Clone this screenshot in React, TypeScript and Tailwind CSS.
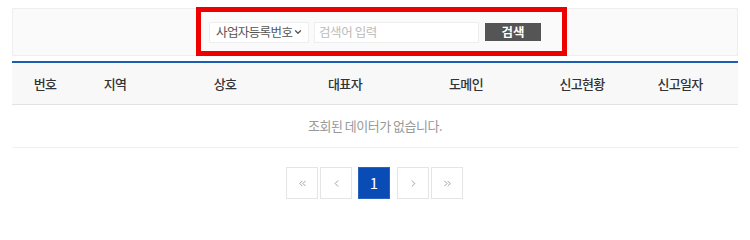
import { ChevronDown, ChevronLeft, ChevronRight, ChevronsLeft, ChevronsRight } from "lucide-react"

const columns = [
  { label: "번호", width: "w-[66px]" },
  { label: "지역", width: "w-[74px]" },
  { label: "상호", width: "w-[146px]" },
  { label: "대표자", width: "w-[94px]" },
  { label: "도메인", width: "w-[148px]" },
  { label: "신고현황", width: "w-[84px]" },
  { label: "신고일자", width: "w-[112px]" },
]

export default function App() {
  return (
    <div className="w-[750px] h-[222px] bg-white font-['Noto_Sans_CJK_KR',sans-serif] text-[#333]">
      <div className="px-3 pt-2">
        {/* search box */}
        <div className="relative h-[48px] border border-[#eeeeee] bg-[#fafafa] flex items-center justify-center">
          <div className="flex items-center">
            <div className="w-[100px] h-[21px] bg-white border border-[#eeeeee] flex items-center pl-[6px] text-[12.5px] tracking-[-0.6px] text-[#555]">
              사업자등록번호
              <ChevronDown className="size-[10px] ml-[1px]" strokeWidth={3} />
            </div>
            <div className="ml-[5px] w-[165px] h-[21px] bg-white border border-[#eeeeee] flex items-center pl-[4px] text-[12.5px] tracking-[-0.4px] text-[#bbb]">
              검색어 입력
            </div>
            <button className="ml-[6px] w-[56px] h-[18px] bg-[#555555] text-white text-[12.5px] font-bold flex items-center justify-center leading-none">
              검색
            </button>
          </div>
          <div className="absolute left-[183px] top-[-2px] w-[371px] h-[49px] border-[5px] border-[#ee0000] pointer-events-none" />
        </div>

        {/* table */}
        <div className="mt-[5px] border-t-2 border-[#1a5fb4]">
          <div className="flex h-[42px] bg-[#f8f8f8] border-b border-[#e2e2e2] items-center">
            {columns.map((col) => (
              <div key={col.label} className={`${col.width} text-center text-[13px] font-medium tracking-[-0.7px] text-[#333]`}>
                {col.label}
              </div>
            ))}
          </div>
          <div className="h-[43px] flex items-center justify-center border-b border-[#f0f0f0] text-[13px] tracking-[-0.5px] text-[#999]">
            조회된 데이터가 없습니다.
          </div>
        </div>

        {/* pagination */}
        <div className="mt-[19px] flex items-center justify-center ml-[-1px]">
          <div className="flex gap-[2px]">
            <button className="size-[32px] border border-[#e5e5e5] bg-white flex items-center justify-center text-[#777]">
              <ChevronsLeft className="size-[11px]" strokeWidth={1.5} />
            </button>
            <button className="size-[32px] border border-[#e5e5e5] bg-white flex items-center justify-center text-[#777]">
              <ChevronLeft className="size-[11px]" strokeWidth={1.5} />
            </button>
          </div>
          <button className="ml-[6px] size-[32px] bg-[#0a4cb5] border border-[#2a62c0] text-white text-[15px] flex items-center justify-center">
            1
          </button>
          <div className="ml-[7px] flex gap-[2px]">
            <button className="size-[32px] border border-[#e5e5e5] bg-white flex items-center justify-center text-[#777]">
              <ChevronRight className="size-[11px]" strokeWidth={1.5} />
            </button>
            <button className="size-[32px] border border-[#e5e5e5] bg-white flex items-center justify-center text-[#777]">
              <ChevronsRight className="size-[11px]" strokeWidth={1.5} />
            </button>
          </div>
        </div>
      </div>
    </div>
  )
}
